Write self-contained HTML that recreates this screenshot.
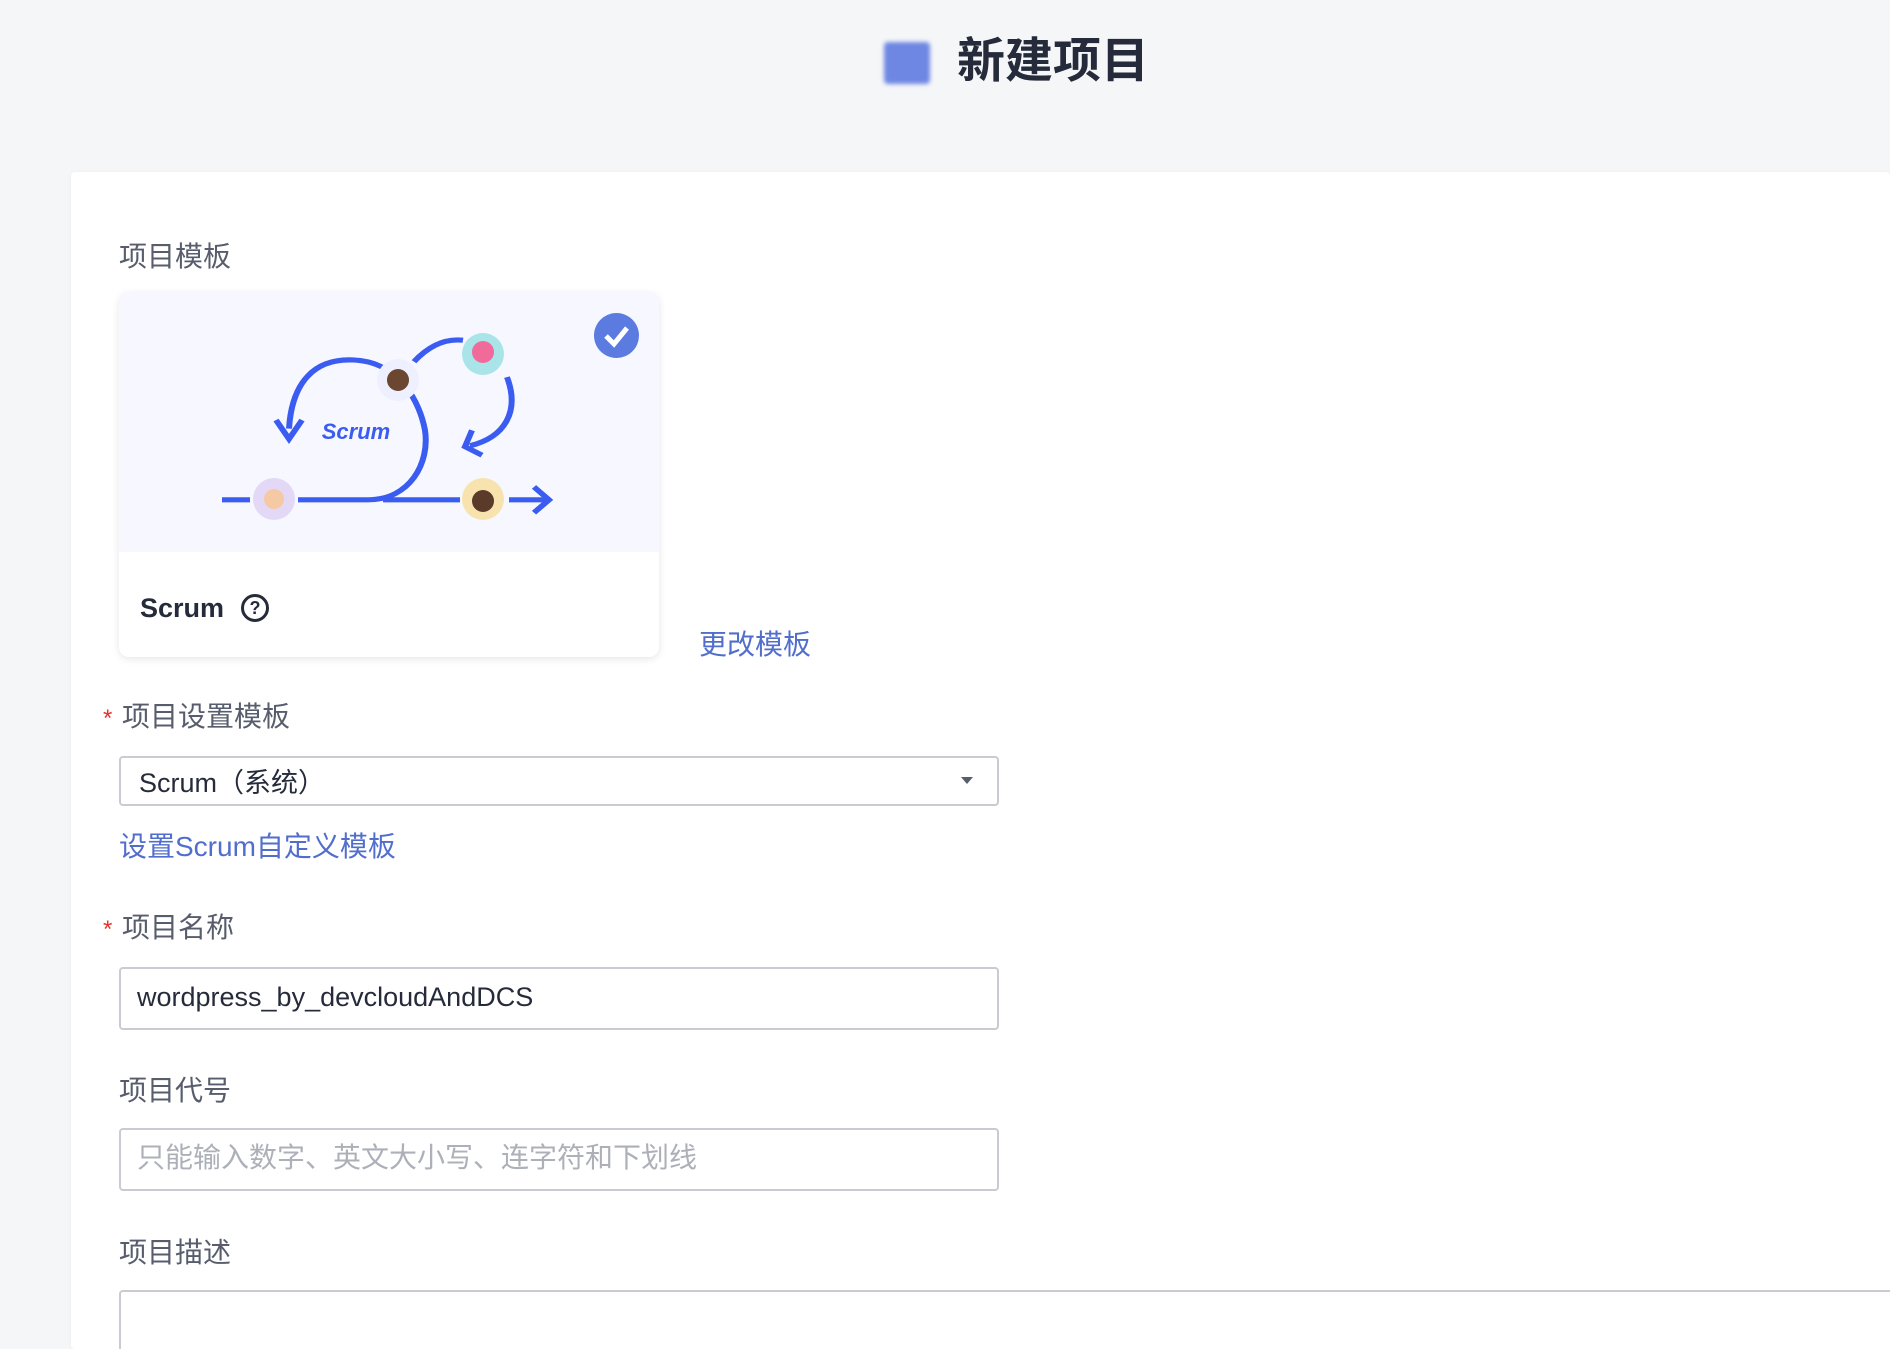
<!DOCTYPE html>
<html style="overflow:hidden;height:1349px"><head><meta charset="utf-8"><style>
*{margin:0;padding:0;box-sizing:border-box}
body{width:1890px;height:1349px;overflow:hidden;background:#f5f6f8;font-family:"Liberation Sans","Noto Sans CJK SC",sans-serif;position:relative;color:#252b3a}
.abs{position:absolute}
.panel{left:71px;top:172px;width:1819px;height:1177px;background:#fff;border-radius:4px;box-shadow:0 0 4px rgba(0,0,0,.04)}
.lbl{font-size:28px;color:#575d6c;line-height:32px}
.req{color:#e6322e;font-size:24px}
.link{color:#526ecc;font-size:28px;line-height:32px}
.inp{border:2px solid #c8cbd1;border-radius:4px;background:#fff}
</style></head><body>
<div class="abs" style="left:884px;top:42px;width:46px;height:42px;background:#5674e0;border-radius:4px;filter:blur(2px);opacity:.85"></div>
<div class="abs" style="left:957px;top:32px;font-size:48px;font-weight:bold;line-height:60px;color:#252b3a">新建项目</div>
<div class="abs panel"></div>
<div class="abs lbl" style="left:119px;top:241px">项目模板</div>
<div class="abs" style="left:119px;top:292px;width:540px;height:365px;border-radius:10px;background:#fff;box-shadow:0 2px 8px rgba(0,0,0,.1);overflow:hidden">
<svg width="540" height="260" viewBox="119 292 540 260" style="display:block;background:#f7f8ff">
<g transform="matrix(1 0 0 0.858 0 42.5)">
<g fill="none" stroke="#3b5cf0" stroke-width="6" stroke-linecap="butt">
<path d="M222 533 H250"/>
<path d="M298 533 H368 C410 533 430 490 425 452 C420 420 400 372 353 370 C315 368 292 395 289 450"/>
<path d="M276 440 L289 462 L302 440" stroke-linejoin="miter"/>
<path d="M414 372 C430 352 447 345 463 347"/>
<path d="M507 390 C520 430 505 460 470 470"/>
<path d="M472 452 L465 471 L482 481"/>
<path d="M383 533 H460"/>
<path d="M509 533 H548"/>
<path d="M534 518 L549 533 L534 548"/>
</g>
</g>
<circle cx="274" cy="499" r="21" fill="#e4d8f7"/><circle cx="274" cy="499" r="10" fill="#f4c9a3"/>
<circle cx="483" cy="499" r="21" fill="#f8e3ae"/><circle cx="483" cy="501" r="11" fill="#5a3b2a"/>
<circle cx="398" cy="380" r="21" fill="#eef0ff"/><circle cx="398" cy="380" r="11" fill="#6b4630"/>
<circle cx="483" cy="354" r="21" fill="#a8e4e8"/><circle cx="483" cy="352" r="11" fill="#f06a9a"/>
<text x="356" y="439" text-anchor="middle" font-family="Liberation Sans" font-weight="bold" font-style="italic" font-size="22" fill="#3b5cf0">Scrum</text>
</svg>
<div class="abs" style="left:21px;top:300px;font-size:27px;font-weight:bold;color:#252b3a;line-height:32px">Scrum</div>
<div class="abs" style="left:122px;top:302px;width:28px;height:28px;border:3px solid #252b3a;border-radius:50%;font-size:18px;font-weight:bold;text-align:center;line-height:22px">?</div>
<div class="abs" style="left:475px;top:21px;width:45px;height:45px;border-radius:50%;background:#5b7be0">
<svg width="45" height="45"><path d="M12 23 L20 31 L33 15" fill="none" stroke="#fff" stroke-width="5"/></svg></div>
</div>
<div class="abs link" style="left:699px;top:629px">更改模板</div>
<div class="abs req" style="left:103px;top:705px">*</div>
<div class="abs lbl" style="left:122px;top:701px">项目设置模板</div>
<div class="abs inp" style="left:119px;top:756px;width:880px;height:50px"></div>
<div class="abs" style="left:139px;top:767px;font-size:27px;line-height:32px">Scrum（系统）</div>
<div class="abs" style="left:961px;top:777px;width:0;height:0;border-left:6px solid transparent;border-right:6px solid transparent;border-top:7px solid #575d6c"></div>
<div class="abs link" style="left:119px;top:831px">设置Scrum自定义模板</div>
<div class="abs req" style="left:103px;top:916px">*</div>
<div class="abs lbl" style="left:122px;top:912px">项目名称</div>
<div class="abs inp" style="left:119px;top:967px;width:880px;height:63px"></div>
<div class="abs" style="left:137px;top:981px;font-size:27px;line-height:32px">wordpress_by_devcloudAndDCS</div>
<div class="abs lbl" style="left:119px;top:1075px">项目代号</div>
<div class="abs inp" style="left:119px;top:1128px;width:880px;height:63px"></div>
<div class="abs" style="left:137px;top:1142px;font-size:28px;line-height:32px;color:#adb0b8">只能输入数字、英文大小写、连字符和下划线</div>
<div class="abs lbl" style="left:119px;top:1237px">项目描述</div>
<div class="abs inp" style="left:119px;top:1290px;width:1780px;height:100px"></div>
</body></html>
